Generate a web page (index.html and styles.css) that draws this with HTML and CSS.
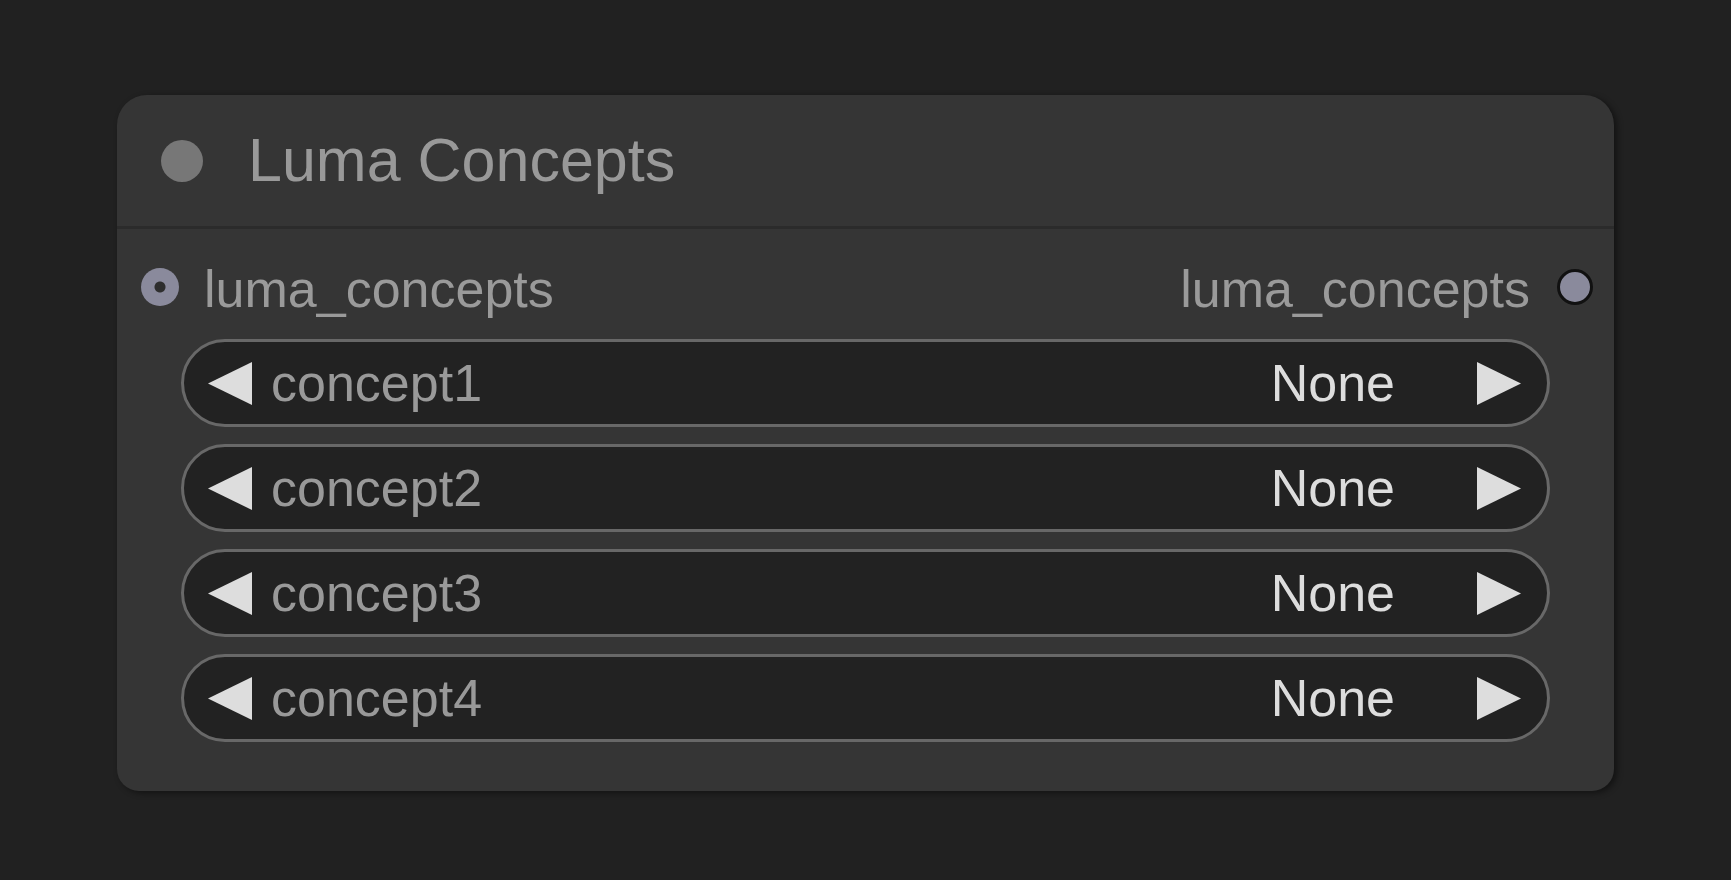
FILE: index.html
```html
<!DOCTYPE html>
<html>
<head>
<meta charset="utf-8">
<link rel="stylesheet" href="styles.css">
</head>
<body>
<div class="canvas">
  <div class="node">
    <div class="title">
      <span class="title-dot"></span>
      <span class="title-text">Luma Concepts</span>
    </div>
    <div class="body">
      <div class="slots">
        <div class="slot in">
          <span class="slot-in"></span>
          <span class="slot-label">luma_concepts</span>
        </div>
        <div class="slot out">
          <span class="slot-label">luma_concepts</span>
          <span class="slot-out"></span>
        </div>
      </div>
      <div class="widgets">
        <div class="widget">
          <svg class="arrow" width="44" height="43" viewBox="0 0 44 43"><polygon points="44,0 44,43 0,21.5"/></svg>
          <span class="w-label">concept1</span>
          <span class="w-value">None</span>
          <svg class="arrow" width="44" height="43" viewBox="0 0 44 43"><polygon points="0,0 0,43 44,21.5"/></svg>
        </div>
        <div class="widget">
          <svg class="arrow" width="44" height="43" viewBox="0 0 44 43"><polygon points="44,0 44,43 0,21.5"/></svg>
          <span class="w-label">concept2</span>
          <span class="w-value">None</span>
          <svg class="arrow" width="44" height="43" viewBox="0 0 44 43"><polygon points="0,0 0,43 44,21.5"/></svg>
        </div>
        <div class="widget">
          <svg class="arrow" width="44" height="43" viewBox="0 0 44 43"><polygon points="44,0 44,43 0,21.5"/></svg>
          <span class="w-label">concept3</span>
          <span class="w-value">None</span>
          <svg class="arrow" width="44" height="43" viewBox="0 0 44 43"><polygon points="0,0 0,43 44,21.5"/></svg>
        </div>
        <div class="widget">
          <svg class="arrow" width="44" height="43" viewBox="0 0 44 43"><polygon points="44,0 44,43 0,21.5"/></svg>
          <span class="w-label">concept4</span>
          <span class="w-value">None</span>
          <svg class="arrow" width="44" height="43" viewBox="0 0 44 43"><polygon points="0,0 0,43 44,21.5"/></svg>
        </div>
      </div>
    </div>
  </div>
</div>
</body>
</html>
```
FILE: styles.css
```css
html, body {
  margin: 0;
  padding: 0;
  background: #212121;
  width: 1731px;
  height: 880px;
  overflow: hidden;
  font-family: "Liberation Sans", Arial, sans-serif;
}

.canvas {
  padding: 95px 0 0 117px;
}

.node {
  width: 1497px;
  height: 696px;
  box-sizing: border-box;
  background: #353535;
  border-radius: 30px 30px 22px 22px;
  box-shadow: 3px 2px 6px rgba(0, 0, 0, 0.45);
  display: flex;
  flex-direction: column;
}

.title {
  height: 131px;
  border-bottom: 3px solid #2b2b2b;
  display: flex;
  align-items: center;
  padding-left: 44px;
  gap: 45px;
}

.title-dot {
  width: 42px;
  height: 42px;
  border-radius: 50%;
  background: #777777;
  flex: none;
}

.title-text {
  font-size: 61px;
  line-height: 61px;
  color: #999999;
}

.body {
  padding: 34px 21px 0 24px;
}

.slots {
  display: flex;
  justify-content: space-between;
  align-items: center;
  height: 52px;
}

.slot {
  display: flex;
  align-items: center;
}

.slot.in {
  gap: 25px;
}

.slot.out {
  gap: 27px;
}

.slot-label {
  font-size: 52px;
  line-height: 52px;
  color: #9a9a9a;
}

.slot-in {
  width: 38px;
  height: 38px;
  border-radius: 50%;
  background: radial-gradient(circle, #2e2e2e 0 5px, #8a8a9c 6px);
  flex: none;
  margin-top: -4px;
}

.slot-out {
  width: 36px;
  height: 36px;
  box-sizing: border-box;
  border-radius: 50%;
  background: #8a8a9c;
  border: 3px solid #111111;
  flex: none;
  margin-top: -4px;
}

.widgets {
  margin: 24px 43px 0 40px;
  display: flex;
  flex-direction: column;
  gap: 17px;
}

.widget {
  height: 88px;
  box-sizing: border-box;
  border: 3px solid #686868;
  border-radius: 44px;
  background: #222222;
  display: flex;
  align-items: center;
  padding: 0 26px 0 24px;
}

.arrow {
  fill: #dddddd;
  flex: none;
}

.w-label {
  font-size: 52px;
  color: #999999;
  margin-left: 19px;
  flex: 1;
}

.w-value {
  font-size: 52px;
  color: #dddddd;
  margin-right: 82px;
}
```
